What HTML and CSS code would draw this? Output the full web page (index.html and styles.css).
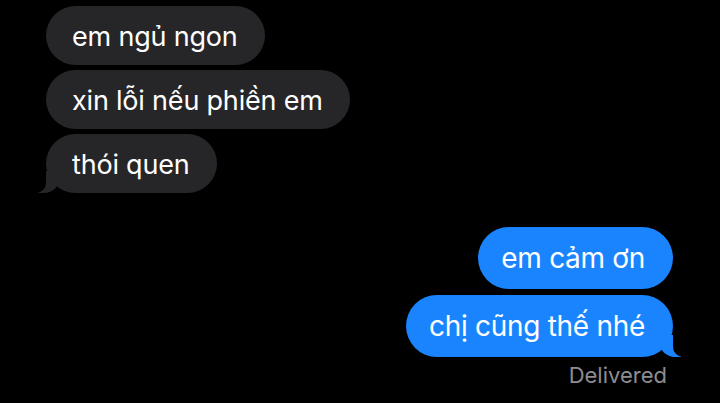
FILE: index.html
```html
<!DOCTYPE html>
<html lang="vi">
<head>
<meta charset="utf-8">
<title>Messages</title>
<link rel="stylesheet" href="styles.css">
</head>
<body>
<main class="thread">
  <section class="group received">
    <div class="bubble">em ngủ ngon</div>
    <div class="bubble">xin lỗi nếu phiền em</div>
    <div class="bubble tail">thói quen</div>
  </section>
  <section class="group sent">
    <div class="bubble">em cảm ơn</div>
    <div class="bubble tail">chị cũng thế nhé</div>
    <div class="status">Delivered</div>
  </section>
</main>
</body>
</html>
```
FILE: styles.css
```css
html, body {
  margin: 0;
  padding: 0;
  background: #000;
  width: 720px;
  height: 403px;
  overflow: hidden;
}

.thread {
  display: flex;
  flex-direction: column;
  padding-top: 6px;
  font-family: Inter, "Noto Sans", sans-serif;
  -webkit-font-smoothing: antialiased;
}

.group {
  display: flex;
  flex-direction: column;
  gap: 5px;
}

.received {
  align-items: flex-start;
  padding-left: 46px;
}

.sent {
  align-items: flex-end;
  padding-right: 47px;
  margin-top: 34px;
  gap: 6px;
}

.bubble {
  position: relative;
  color: #fff;
  font-size: 27px;
  line-height: 31px;
  letter-spacing: -0.2px;
  padding: 15px 27px 13px 26px;
  border-radius: 30px;
  white-space: nowrap;
}

.received .bubble {
  background: #262629;
}

.sent .bubble {
  background: #1a84ff;
  font-size: 28px;
  line-height: 34px;
  letter-spacing: -0.3px;
  padding: 14px 28px 14px 23px;
  border-radius: 31px;
}

.bubble.tail::before,
.bubble.tail::after {
  content: "";
  position: absolute;
  bottom: 0;
  height: 22px;
}

.received .bubble.tail::before {
  left: -8px;
  width: 22px;
  background: #262629;
  border-bottom-right-radius: 16px;
}

.received .bubble.tail::after {
  left: -12px;
  width: 12px;
  background: #000;
  border-bottom-right-radius: 10px;
}

.sent .bubble.tail::before {
  right: -8px;
  width: 22px;
  background: #1a84ff;
  border-bottom-left-radius: 16px;
}

.sent .bubble.tail::after {
  right: -12px;
  width: 12px;
  background: #000;
  border-bottom-left-radius: 10px;
}

.status {
  margin-top: -1px;
  margin-right: 6px;
  color: #8d8d92;
  font-size: 22px;
  line-height: 26px;
}
```
